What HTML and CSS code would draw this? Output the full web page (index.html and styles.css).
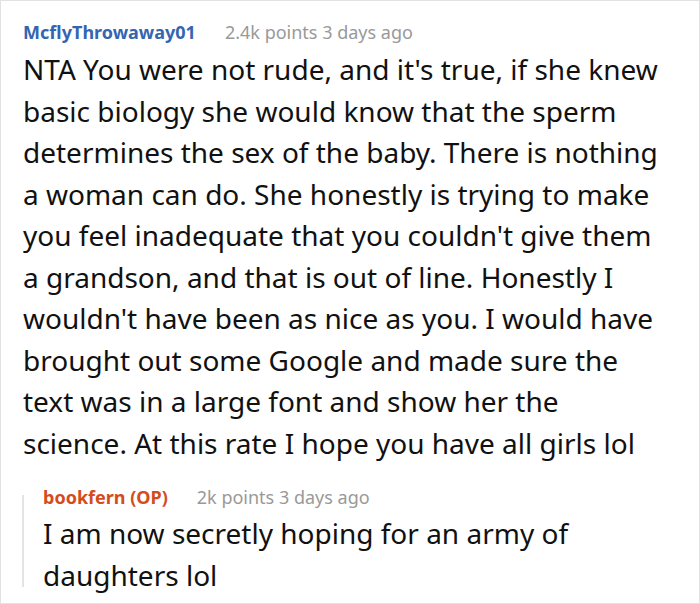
FILE: index.html
```html
<!DOCTYPE html>
<html>
<head>
<meta charset="utf-8">
<link rel="stylesheet" href="styles.css">
</head>
<body>
<div class="frame">
  <div class="comment">
    <div class="meta"><span class="user">McflyThrowaway01</span><span class="info">2.4k points 3 days ago</span></div>
    <p class="text">NTA You were not rude, and it's true, if she knew basic biology she would know that the sperm determines the sex of the baby. There is nothing a woman can do. She honestly is trying to make you feel inadequate that you couldn't give them a grandson, and that is out of line. Honestly I wouldn't have been as nice as you. I would have brought out some Google and made sure the text was in a large font and show her the science. At this rate I hope you have all girls lol</p>
    <div class="reply">
      <div class="meta"><span class="user op">bookfern (OP)</span><span class="info">2k points 3 days ago</span></div>
      <p class="text reply-text">I am now secretly hoping for an army of daughters lol</p>
    </div>
  </div>
</div>
</body>
</html>
```
FILE: styles.css
```css
html, body { margin: 0; padding: 0; background: #fff; }
.frame {
  box-sizing: border-box;
  width: 700px;
  height: 604px;
  border: 1px solid #e2e2e2;
  padding: 18px 35px 0 22px;
  font-family: "Noto Sans", "Open Sans", sans-serif;
  overflow: hidden;
}
.meta { font-size: 18px; line-height: 26px; display: flex; gap: 29px; }
.user { font-weight: 700; color: #3565b0; }
.user.op { color: #d54c1b; }
.info { color: #999; }
.text { margin: 4px 0 0 0; font-size: 28px; line-height: 41.5px; color: #111; }
.reply-text { margin-top: 3px; }
.reply {
  position: relative;
  margin: 20px 0 0 0;
  padding-left: 20px;
}
.reply::before {
  content: "";
  position: absolute;
  left: -1px;
  top: 11px;
  bottom: 9px;
  width: 2px;
  background: #e4e4e4;
}
```
